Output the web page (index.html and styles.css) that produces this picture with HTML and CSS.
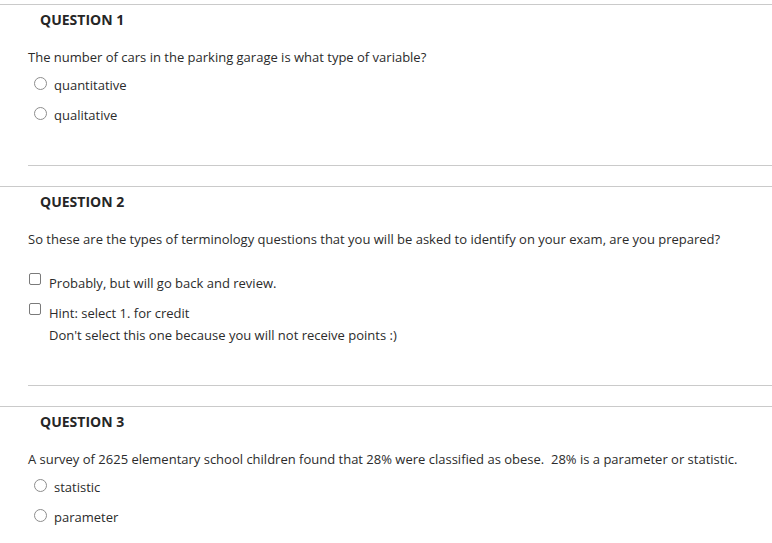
FILE: index.html
```html
<!DOCTYPE html>
<html>
<head>
<meta charset="utf-8">
<link rel="stylesheet" href="styles.css">
</head>
<body>
<div class="question">
  <div class="q-body">
    <h3 class="q-title">QUESTION 1</h3>
    <p class="q-text">The number of cars in the parking garage is what type of variable?</p>
    <div class="options">
      <div class="option radio-opt"><span class="radio"></span><span class="label">quantitative</span></div>
      <div class="option radio-opt"><span class="radio"></span><span class="label">qualitative</span></div>
    </div>
  </div>
</div>
<div class="question">
  <div class="q-body">
    <h3 class="q-title">QUESTION 2</h3>
    <p class="q-text q-text-extra">So these are the types of terminology questions that you will be asked to identify on your exam, are you prepared?</p>
    <div class="options">
      <div class="option check-opt"><span class="checkbox"></span><span class="label">Probably, but will go back and review.</span></div>
      <div class="option check-opt"><span class="checkbox"></span><div class="label">Hint: select 1. for credit<div class="label-extra">Don't select this one because you will not receive points :)</div></div></div>
    </div>
  </div>
</div>
<div class="question">
  <div class="q-body">
    <h3 class="q-title">QUESTION 3</h3>
    <p class="q-text">A survey of 2625 elementary school children found that 28% were classified as obese.&nbsp; 28% is a parameter or statistic.</p>
    <div class="options">
      <div class="option radio-opt"><span class="radio"></span><span class="label">statistic</span></div>
      <div class="option radio-opt"><span class="radio"></span><span class="label">parameter</span></div>
    </div>
  </div>
</div>
</body>
</html>
```
FILE: styles.css
```css
html, body {
  margin: 0;
  background: #fff;
}
body {
  padding-top: 4px;
  font-family: "Open Sans", "Liberation Sans", sans-serif;
  font-size: 13px;
  line-height: 20px;
  color: #2b2b2b;
}
.question {
  border-top: 1px solid #cacaca;
  margin-bottom: 20px;
}
.q-body {
  margin-left: 28px;
  padding-bottom: 40px;
  border-bottom: 1px solid #cacaca;
}
.q-title {
  margin: 0;
  padding: 5px 0 0 12px;
  font-size: 14px;
  font-weight: 700;
  line-height: 20px;
  color: #262626;
}
.q-text {
  margin: 17px 0 0 0;
}
.q-text-extra {
  margin-bottom: 24px;
}
.options {
  margin-top: 8px;
  display: flex;
  flex-direction: column;
  gap: 10px;
}
.option {
  display: flex;
  align-items: flex-start;
}
.radio-opt {
  padding-left: 6px;
}
.check-opt {
  padding-left: 1px;
}
.radio {
  width: 11px;
  height: 11px;
  border: 1px solid #8d8d8d;
  border-radius: 50%;
  background: #fff;
  margin-top: 2px;
  margin-right: 7px;
  flex: none;
}
.checkbox {
  width: 10px;
  height: 10px;
  border: 1px solid #7a7a7a;
  border-radius: 2px;
  background: #fff;
  margin-top: 0;
  margin-right: 8px;
  flex: none;
}
.label-extra {
  margin-top: 2px;
}
```
